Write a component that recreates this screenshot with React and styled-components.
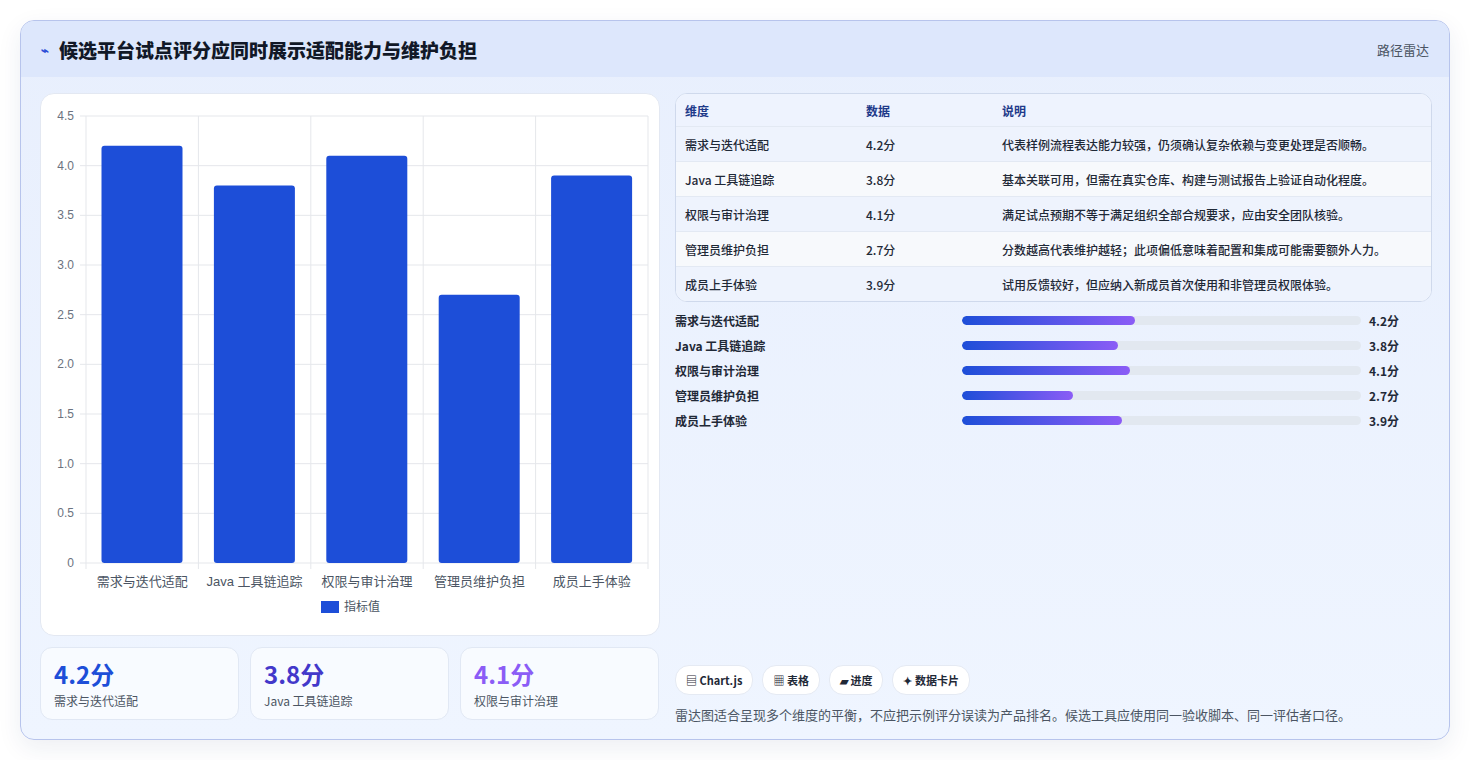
import React from 'react';
import styled, { createGlobalStyle } from 'styled-components';

const Global = createGlobalStyle`
  body { margin: 0; background: #fff; font-family: "Noto Sans CJK SC", "Noto Sans", sans-serif; }
`;

const data = [
  { name: '需求与迭代适配', v: 4.2, note: '代表样例流程表达能力较强，仍须确认复杂依赖与变更处理是否顺畅。' },
  { name: 'Java 工具链追踪', v: 3.8, note: '基本关联可用，但需在真实仓库、构建与测试报告上验证自动化程度。' },
  { name: '权限与审计治理', v: 4.1, note: '满足试点预期不等于满足组织全部合规要求，应由安全团队核验。' },
  { name: '管理员维护负担', v: 2.7, note: '分数越高代表维护越轻；此项偏低意味着配置和集成可能需要额外人力。' },
  { name: '成员上手体验', v: 3.9, note: '试用反馈较好，但应纳入新成员首次使用和非管理员权限体验。' },
];

const Page = styled.div`
  padding: 20px;
`;
const Card = styled.div`
  width: 1430px;
  height: 720px;
  box-sizing: border-box;
  border: 1px solid #b7c4ec;
  border-radius: 14px;
  background: linear-gradient(180deg, #e8effd 0%, #eff5ff 100%);
  box-shadow: 0 8px 24px rgba(30, 50, 100, 0.08);
  overflow: hidden;
  display: flex;
  flex-direction: column;
`;
const Header = styled.div`
  height: 56px;
  background: #dde7fc;
  display: flex;
  align-items: center;
  justify-content: space-between;
  padding: 0 20px;
`;
const Title = styled.h1`
  margin: 0;
  font-size: 19px;
  font-weight: 800;
  color: #111827;
  display: flex;
  align-items: center;
  gap: 10px;
`;
const Glyph = styled.span`
  color: #2b4bd6;
  font-size: 13px;
`;
const Tag = styled.span`
  font-size: 13px;
  color: #4b5563;
`;
const Body = styled.div`
  display: grid;
  grid-template-columns: 620px 757px;
  gap: 15px;
  padding: 16px 18px 0 19px;
`;
const Left = styled.div`
  display: flex;
  flex-direction: column;
  gap: 11px;
`;
const ChartBox = styled.div`
  height: 543px;
  background: #fff;
  border: 1px solid #e3e8f2;
  border-radius: 14px;
  box-sizing: border-box;
  overflow: hidden;
`;
const Stats = styled.div`
  display: grid;
  grid-template-columns: repeat(3, 199px);
  gap: 11px;
`;
const Stat = styled.div`
  height: 73px;
  box-sizing: border-box;
  background: #f8fbff;
  border: 1px solid #e1e8f4;
  border-radius: 12px;
  padding: 10px 13px;
`;
const StatVal = styled.div`
  font-size: 24px;
  font-weight: 700;
  color: ${p => p.$c};
  line-height: 32px;
`;
const StatLabel = styled.div`
  font-size: 12px;
  color: #4b5563;
  margin-top: 2px;
`;
const Right = styled.div`
  display: flex;
  flex-direction: column;
`;
const Table = styled.div`
  border: 1px solid #cfd9ec;
  border-radius: 12px;
  overflow: hidden;
  background: #fff;
`;
const Row = styled.div`
  display: grid;
  grid-template-columns: 181px 136px 1fr;
  height: ${p => (p.$head ? 32 : 34)}px;
  align-items: center;
  padding-left: 9px;
  font-size: 12px;
  color: ${p => (p.$head ? '#1e3a8a' : '#1f2937')};
  font-weight: ${p => (p.$head ? 700 : 500)};
  background: ${p => (p.$head ? '#eef3fe' : p.$alt ? '#f7f9fc' : '#eef3fd')};
  border-top: ${p => (p.$head ? 'none' : '1px solid #e3e9f3')};
`;
const Bars = styled.div`
  margin-top: 9px;
  display: flex;
  flex-direction: column;
  gap: 7px;
`;
const BarRow = styled.div`
  display: grid;
  grid-template-columns: 279px 399px auto;
  align-items: center;
  column-gap: 8px;
  font-size: 12px;
  font-weight: 600;
  color: #1f2937;
  height: 18px;
`;
const Track = styled.div`
  height: 9px;
  border-radius: 5px;
  background: #e2e8f0;
  overflow: hidden;
`;
const Fill = styled.div`
  height: 100%;
  border-radius: 5px;
  background: linear-gradient(90deg, #1d4ed8, #8b5cf6);
`;
const Chips = styled.div`
  display: flex;
  gap: 9px;
  margin-top: 236px;
`;
const Chip = styled.span`
  height: 28px;
  padding: 0 10px;
  border-radius: 14px;
  background: #fff;
  border: 1px solid #e5eaf3;
  display: inline-flex;
  align-items: center;
  gap: 4px;
  font-size: 11px;
  font-weight: 600;
  color: #1f2937;
`;
const Note = styled.p`
  margin: 10px 0 0;
  font-size: 13px;
  color: #4b5563;
`;

function BarChart() {
  const x0 = 45, x1 = 607, y0 = 469, yTop = 22;
  const unit = (y0 - yTop) / 4.5;
  const w = (x1 - x0) / 5;
  const ticks = [0, 0.5, 1, 1.5, 2, 2.5, 3, 3.5, 4, 4.5];
  const font = '"Liberation Sans", "Noto Sans CJK SC", sans-serif';
  return (
    <svg width="618" height="541" style={{ display: 'block' }}>
      {ticks.map(t => (
        <g key={t}>
          <line x1={x0 - 6} x2={x1} y1={y0 - t * unit} y2={y0 - t * unit} stroke="#e5e7eb" />
          <text x={x0 - 12} y={y0 - t * unit + 4} textAnchor="end" fontSize="12" fill="#6b7280" fontFamily={font}>
            {t === 0 ? '0' : t.toFixed(1)}
          </text>
        </g>
      ))}
      {[0, 1, 2, 3, 4, 5].map(i => (
        <line key={i} x1={x0 + i * w} x2={x0 + i * w} y1={yTop} y2={y0 + 6} stroke="#e5e7eb" />
      ))}
      {data.map((d, i) => (
        <g key={d.name}>
          <rect x={x0 + i * w + 15.5} y={y0 - d.v * unit} width={81} height={d.v * unit} rx="3" fill="#1d4ed8" />
          <text x={x0 + i * w + w / 2} y={y0 + 23} textAnchor="middle" fontSize="13" fill="#4b5563" fontFamily={font}>{d.name}</text>
        </g>
      ))}
      <rect x="280" y="507" width="18" height="12" fill="#1d4ed8" />
      <text x="303" y="517" fontSize="12" fill="#4b5563" fontFamily={font}>指标值</text>
    </svg>
  );
}

export default function App() {
  const colors = ['#1d4ed8', '#4338ca', '#8b5cf6'];
  return (
    <Page>
      <Global />
      <Card>
        <Header>
          <Title><Glyph>⌁</Glyph>候选平台试点评分应同时展示适配能力与维护负担</Title>
          <Tag>路径雷达</Tag>
        </Header>
        <Body>
          <Left>
            <ChartBox><BarChart /></ChartBox>
            <Stats>
              {data.slice(0, 3).map((d, i) => (
                <Stat key={d.name}>
                  <StatVal $c={colors[i]}>{d.v}分</StatVal>
                  <StatLabel>{d.name}</StatLabel>
                </Stat>
              ))}
            </Stats>
          </Left>
          <Right>
            <Table>
              <Row $head><span>维度</span><span>数据</span><span>说明</span></Row>
              {data.map((d, i) => (
                <Row key={d.name} $alt={i % 2 === 1}>
                  <span>{d.name}</span><span>{d.v}分</span><span>{d.note}</span>
                </Row>
              ))}
            </Table>
            <Bars>
              {data.map(d => (
                <BarRow key={d.name}>
                  <span>{d.name}</span>
                  <Track><Fill style={{ width: `${d.v * 10.3}%` }} /></Track>
                  <span>{d.v}分</span>
                </BarRow>
              ))}
            </Bars>
            <Chips>
              <Chip>▤ Chart.js</Chip>
              <Chip>▦ 表格</Chip>
              <Chip>▰ 进度</Chip>
              <Chip>✦ 数据卡片</Chip>
            </Chips>
            <Note>雷达图适合呈现多个维度的平衡，不应把示例评分误读为产品排名。候选工具应使用同一验收脚本、同一评估者口径。</Note>
          </Right>
        </Body>
      </Card>
    </Page>
  );
}
